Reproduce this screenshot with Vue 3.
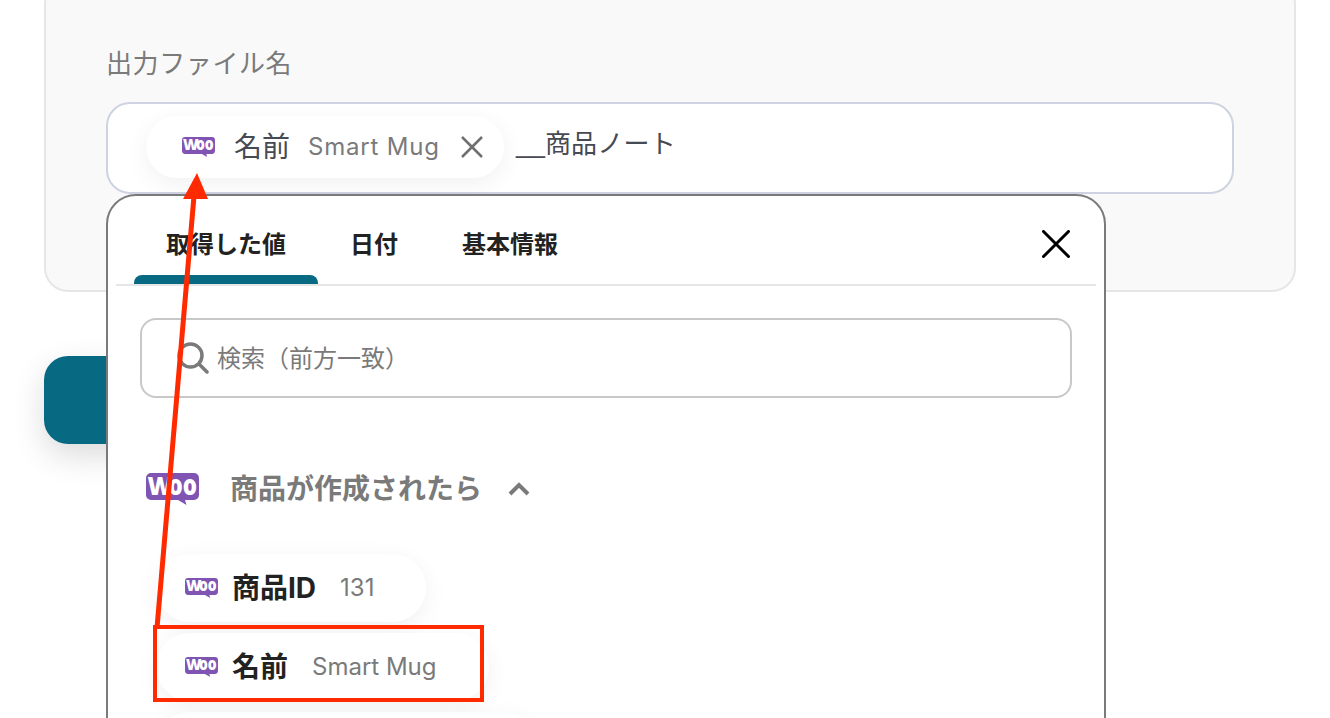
<template>
  <div class="page">
    <section class="card">
      <label class="field-label">出力ファイル名</label>
      <div class="field">
        <div class="input">
          <div class="chip chip-input">
            <svg class="woo-sm" viewBox="0 -5 53 37">
              <path class="woo-bg" d="M5 0H48a5 5 0 0 1 5 5V22a5 5 0 0 1-5 5H39L40.500 32L32 27H5a5 5 0 0 1-5-5V5a5 5 0 0 1 5-5Z" />
              <text class="woo-w" x="1.500" y="21.500">W</text><text class="woo-o" x="22.500" y="21.500" textLength="28.500" lengthAdjust="spacingAndGlyphs">oo</text>
            </svg>
            <span class="chip-name">名前</span>
            <span class="chip-value">Smart Mug</span>
            <svg class="chip-close" viewBox="0 0 24 24"><path d="M2 2L22 22M22 2L2 22" /></svg>
          </div>
          <span class="input-text"><span class="underscores">__</span>商品ノート</span>
        </div>

        <div class="popup">
          <div class="tabs">
            <div
              v-for="(tab, index) in tabs"
              :key="tab"
              class="tab"
              :class="{ active: index === 0 }"
            >{{ tab }}</div>
            <svg class="popup-close" viewBox="0 0 28 28"><path d="M1.500 1.500L26.500 26.500M26.500 1.500L1.500 26.500" /></svg>
          </div>

          <div class="popup-body">
            <div class="search">
              <svg class="search-icon" viewBox="0 0 32 32">
                <circle cx="13.500" cy="13.500" r="11.500" />
                <path d="M22 22L30 30" />
              </svg>
              <span class="search-text">検索（前方一致）</span>
            </div>

            <div class="group-head">
              <svg class="woo-lg" viewBox="0 -5 53 37">
                <path class="woo-bg" d="M5 0H48a5 5 0 0 1 5 5V22a5 5 0 0 1-5 5H39L40.500 32L32 27H5a5 5 0 0 1-5-5V5a5 5 0 0 1 5-5Z" />
                <text class="woo-w" x="1.500" y="21.500">W</text><text class="woo-o" x="22.500" y="21.500" textLength="28.500" lengthAdjust="spacingAndGlyphs">oo</text>
              </svg>
              <span class="group-title">商品が作成されたら</span>
              <svg class="chevron" viewBox="0 0 22 14"><path d="M2 12L11 3L20 12" /></svg>
            </div>

            <div class="values">
              <div v-for="item in values" :key="item.name" class="chip chip-value-row">
                <svg class="woo-sm" viewBox="0 -5 53 37">
                  <path class="woo-bg" d="M5 0H48a5 5 0 0 1 5 5V22a5 5 0 0 1-5 5H39L40.500 32L32 27H5a5 5 0 0 1-5-5V5a5 5 0 0 1 5-5Z" />
                  <text class="woo-w" x="1.500" y="21.500">W</text><text class="woo-o" x="22.500" y="21.500" textLength="28.500" lengthAdjust="spacingAndGlyphs">oo</text>
                </svg>
                <span class="row-name">{{ item.name }}</span>
                <span class="row-value">{{ item.value }}</span>
              </div>
              <div class="chip chip-next"></div>
            </div>
          </div>
        </div>
      </div>
    </section>

    <button class="submit"></button>

    <!-- annotation drawn on top of the screenshot -->
    <svg class="annotation" width="1330" height="718" viewBox="0 0 1330 718">
      <path d="M157 628L194 196" class="arrow-line" />
      <path d="M197 173L208 199H183Z" fill="#ff2a00" />
      <rect x="155" y="627" width="327" height="73" class="arrow-box" />
    </svg>
  </div>
</template>

<script setup>
const tabs = ['取得した値', '日付', '基本情報'];

const values = [
  { name: '商品ID', value: '131' },
  { name: '名前', value: 'Smart Mug' },
];
</script>

<style scoped>
.page {
  position: relative;
  height: 718px;
  overflow: hidden;
  padding: 0 34px 0 44px;
  box-sizing: border-box;
  background: #fff;
  font-family: Inter, "Noto Sans CJK JP", sans-serif;
}

.woo-bg {
  fill: #7f54b3;
}

.woo-w,
.woo-o {
  font-family: "Open Sans", sans-serif;
  font-weight: 800;
  fill: #fff;
}

.woo-w {
  font-size: 24px;
}

.woo-o {
  font-size: 28px;
}

.card {
  box-sizing: border-box;
  height: 312px;
  margin-top: -20px;
  padding: 63px 60px 0 60px;
  background: #f9f9f9;
  border: 2px solid #e6e6e6;
  border-radius: 24px;
}

.field-label {
  display: block;
  height: 38px;
  margin-bottom: 19px;
  font-size: 26px;
  line-height: 38px;
  letter-spacing: 0.6px;
  color: #7a7a7a;
}

.field {
  position: relative;
}

.input {
  box-sizing: border-box;
  display: flex;
  align-items: flex-start;
  height: 92px;
  padding: 12px 0 0 38px;
  background: #fff;
  border: 2px solid #cdd3e0;
  border-radius: 24px;
}

.input-text {
  margin: 9px 0 0 12px;
  font-size: 26px;
  line-height: 38px;
  letter-spacing: 0.2px;
  color: #464a52;
}

.underscores {
  font-family: "Liberation Sans", sans-serif;
  letter-spacing: 0;
}

.chip {
  display: flex;
  align-items: center;
  box-sizing: border-box;
  background: #fff;
  border-radius: 34px;
  box-shadow: 0 6px 24px rgba(0, 0, 0, 0.06);
}

.chip-input {
  width: 358px;
  height: 62px;
  padding-left: 36px;
  border-radius: 31px;
}

/* viewBox has headroom above the badge, pulled back with the margin */
.woo-sm {
  flex-shrink: 0;
  width: 33px;
  height: 23px;
  margin-bottom: 3px;
}

.woo-lg {
  flex-shrink: 0;
  width: 53px;
  height: 37px;
  margin-bottom: 5px;
}

.chip-name {
  margin: 0 0 4px 19px;
  font-size: 28px;
  color: #464a52;
}

.chip-value {
  margin: 0 0 2px 18px;
  font-size: 24px;
  letter-spacing: 0.8px;
  color: #7a7a7a;
  white-space: nowrap;
}

.chip-close {
  flex-shrink: 0;
  width: 24px;
  height: 24px;
  margin-left: 20px;
  fill: none;
  stroke: #6f6f6f;
  stroke-width: 2.500;
}

.popup {
  position: absolute;
  top: 100%;
  left: 0;
  box-sizing: border-box;
  width: 1000px;
  height: 700px;
  padding: 0 8px;
  background: #fff;
  border: 2px solid #7a7a7a;
  border-radius: 30px;
}

.tabs {
  position: relative;
  display: flex;
  height: 90px;
  padding-left: 18px;
  border-bottom: 2px solid #e6e6e6;
  box-sizing: border-box;
}

.tab {
  position: relative;
  padding: 0 32px;
  font-size: 24px;
  font-weight: 700;
  line-height: 98px;
  color: #222;
}

.tab.active::after {
  content: "";
  position: absolute;
  left: 0;
  right: 0;
  bottom: 0;
  height: 9px;
  background: #076a82;
  border-radius: 8px 8px 0 0;
}

.popup-close {
  position: absolute;
  top: 34px;
  right: 26px;
  width: 28px;
  height: 28px;
  fill: none;
  stroke: #000;
  stroke-width: 3;
  stroke-linecap: round;
}

.popup-body {
  padding: 32px 24px 0;
}

.search {
  display: flex;
  align-items: center;
  box-sizing: border-box;
  height: 80px;
  padding-left: 35px;
  font-size: 24px;
  color: #7a7a7a;
  border: 2px solid #c8c8c8;
  border-radius: 16px;
}

.search-icon {
  flex-shrink: 0;
  width: 32px;
  height: 32px;
  margin-right: 8px;
  fill: none;
  stroke: #7a7a7a;
  stroke-width: 3.500;
  stroke-linecap: round;
}

.search-text {
  margin-bottom: 3px;
}

.group-head {
  display: flex;
  align-items: center;
  height: 32px;
  margin: 75px 0 0 6px;
}

.group-title {
  margin: 0 0 4px 31px;
  font-size: 28px;
  font-weight: 700;
  color: #7a7a7a;
}

.chevron {
  width: 22px;
  height: 14px;
  margin-left: 26px;
  fill: none;
  stroke: #7a7a7a;
  stroke-width: 4;
}

.values {
  display: flex;
  flex-direction: column;
  align-items: flex-start;
  gap: 11px;
  margin: 49px 0 0 16px;
}

.chip-value-row {
  height: 68px;
  padding: 0 52px 0 29px;
}

.chip-next {
  width: 382px;
  height: 68px;
}

.row-name {
  margin: 0 0 4px 14px;
  font-size: 28px;
  font-weight: 700;
  color: #222;
}

.row-value {
  margin: 0 0 2px 24px;
  font-size: 24px;
  color: #7a7a7a;
}

.submit {
  display: block;
  width: 320px;
  height: 88px;
  margin-top: 64px;
  background: #076a82;
  border: none;
  border-radius: 24px;
  box-shadow: 0 12px 32px rgba(0, 0, 0, 0.14);
}

.annotation {
  position: absolute;
  top: 0;
  left: 0;
  pointer-events: none;
}

.arrow-line {
  fill: none;
  stroke: #ff2a00;
  stroke-width: 5;
}

.arrow-box {
  fill: none;
  stroke: #ff2a00;
  stroke-width: 4;
}
</style>

<style>
html,
body {
  overflow: hidden;
}
</style>
